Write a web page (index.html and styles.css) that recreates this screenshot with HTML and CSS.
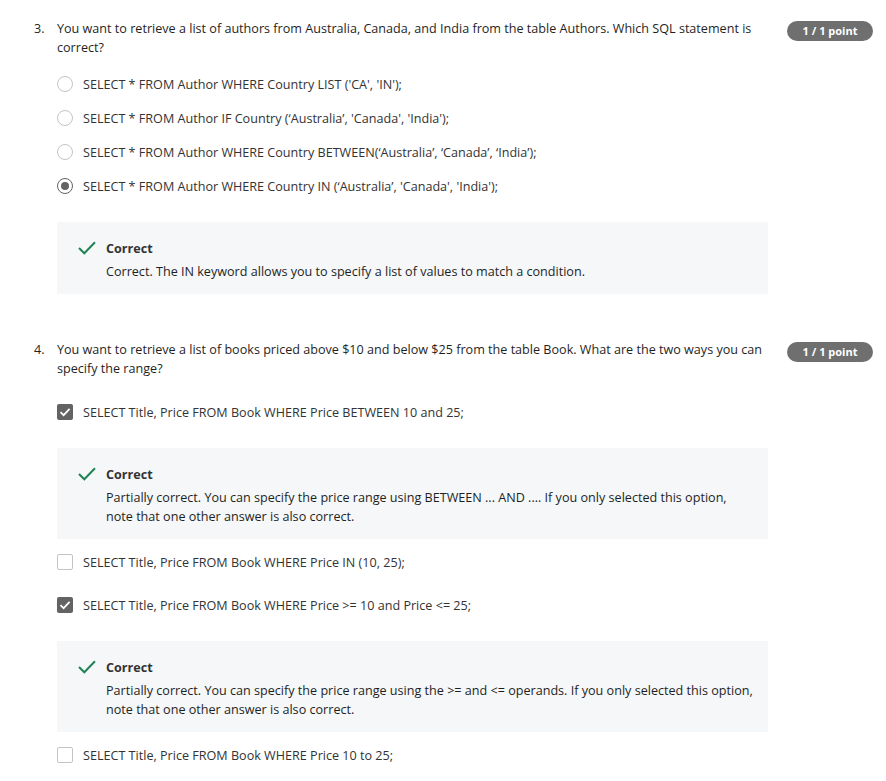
FILE: index.html
```html
<!DOCTYPE html>
<html>
<head>
<meta charset="utf-8">
<link rel="stylesheet" href="styles.css">
</head>
<body>
<div class="page">

  <div class="question q3">
    <div class="qnum">3.</div>
    <div class="qbody">
      <div class="qtext">You want to retrieve a list of authors from Australia, Canada, and India from the table Authors. Which SQL statement is correct?</div>
      <div class="opts radio-list">
        <div class="opt"><span class="radio"></span><span class="otext">SELECT * FROM Author WHERE Country LIST ('CA', 'IN');</span></div>
        <div class="opt"><span class="radio"></span><span class="otext">SELECT * FROM Author IF Country (‘Australia’, 'Canada', 'India');</span></div>
        <div class="opt"><span class="radio"></span><span class="otext">SELECT * FROM Author WHERE Country BETWEEN(‘Australia’, ‘Canada’, ‘India’);</span></div>
        <div class="opt"><span class="radio selected"></span><span class="otext">SELECT * FROM Author WHERE Country IN (‘Australia’, 'Canada', 'India');</span></div>
      </div>
      <div class="feedback fb-radio">
        <svg class="fb-icon" width="18" height="14" viewBox="0 0 18 14"><path d="M1 7 L6.3 12.3 L17 1.3" fill="none" stroke="#1f8354" stroke-width="2"/></svg>
        <div class="fb-body">
          <div class="fb-title">Correct</div>
          <div class="fb-text">Correct. The IN keyword allows you to specify a list of values to match a condition.</div>
        </div>
      </div>
    </div>
    <div class="badge">1 / 1 point</div>
  </div>

  <div class="question q4">
    <div class="qnum">4.</div>
    <div class="qbody">
      <div class="qtext qtext-check">You want to retrieve a list of books priced above $10 and below $25 from the table Book. What are the two ways you can specify the range?</div>
      <div class="opts check-list">
        <div class="item">
          <div class="opt"><span class="box checked"><svg width="16" height="16" viewBox="0 0 16 16"><path d="M3.5 8.2 L6.6 11.2 L12.6 4.8" fill="none" stroke="#fff" stroke-width="1.7"/></svg></span><span class="otext">SELECT Title, Price FROM Book WHERE Price BETWEEN 10 and 25;</span></div>
          <div class="feedback fb-check">
            <svg class="fb-icon" width="18" height="14" viewBox="0 0 18 14"><path d="M1 7 L6.3 12.3 L17 1.3" fill="none" stroke="#1f8354" stroke-width="2"/></svg>
            <div class="fb-body">
              <div class="fb-title">Correct</div>
              <div class="fb-text">Partially correct. You can specify the price range using BETWEEN ... AND .... If you only selected this option, note that one other answer is also correct.</div>
            </div>
          </div>
        </div>
        <div class="item">
          <div class="opt"><span class="box"></span><span class="otext">SELECT Title, Price FROM Book WHERE Price IN (10, 25);</span></div>
        </div>
        <div class="item">
          <div class="opt"><span class="box checked"><svg width="16" height="16" viewBox="0 0 16 16"><path d="M3.5 8.2 L6.6 11.2 L12.6 4.8" fill="none" stroke="#fff" stroke-width="1.7"/></svg></span><span class="otext">SELECT Title, Price FROM Book WHERE Price &gt;= 10 and Price &lt;= 25;</span></div>
          <div class="feedback fb-check">
            <svg class="fb-icon" width="18" height="14" viewBox="0 0 18 14"><path d="M1 7 L6.3 12.3 L17 1.3" fill="none" stroke="#1f8354" stroke-width="2"/></svg>
            <div class="fb-body">
              <div class="fb-title">Correct</div>
              <div class="fb-text">Partially correct. You can specify the price range using the &gt;= and &lt;= operands. If you only selected this option, note that one other answer is also correct.</div>
            </div>
          </div>
        </div>
        <div class="item">
          <div class="opt"><span class="box"></span><span class="otext">SELECT Title, Price FROM Book WHERE Price 10 to 25;</span></div>
        </div>
      </div>
    </div>
    <div class="badge">1 / 1 point</div>
  </div>

</div>
</body>
</html>
```

FILE: styles.css
```css
* { box-sizing: border-box; }
html, body { margin: 0; padding: 0; background: #fff; }
body {
  font-family: "Open Sans", "Liberation Sans", sans-serif;
  font-size: 12.6px;
  line-height: 19px;
  color: #1f1f1f;
}
.page {
  padding: 19px 13px 0 34px;
}
.question {
  display: flex;
  align-items: flex-start;
}
.q3 { margin-bottom: 46px; }
.qnum {
  width: 23px;
  flex: none;
}
.qbody {
  width: 711px;
  flex: none;
}
.qtext { margin-bottom: 10px; }
.qtext-check { margin-bottom: 14px; }
.badge {
  margin-left: 19px;
  margin-top: 2px;
  width: 86px;
  height: 20px;
  border-radius: 10px;
  background: #6f6f6f;
  color: #fff;
  font-size: 11px;
  font-weight: 700;
  line-height: 20px;
  text-align: center;
  flex: none;
}
.opt {
  display: flex;
  align-items: center;
  height: 34px;
}
.check-list .opt { height: 40px; }
.check-list .item { margin-bottom: 3px; }
.otext {
  margin-left: 10px;
  color: #333;
}
.radio {
  width: 16px;
  height: 16px;
  border-radius: 50%;
  border: 1.5px solid #c4c4c4;
  flex: none;
  display: flex;
  align-items: center;
  justify-content: center;
}
.radio.selected { border-color: #636363; }
.radio.selected::after {
  content: "";
  width: 8px;
  height: 8px;
  border-radius: 50%;
  background: #636363;
}
.box {
  width: 16px;
  height: 16px;
  border-radius: 2px;
  border: 1.5px solid #c4c4c4;
  flex: none;
  display: flex;
}
.box.checked {
  background: #636363;
  border: none;
}
.feedback {
  display: flex;
  align-items: flex-start;
  background: #f5f7f8;
  padding: 17px 14px 13px 21px;
}
.fb-radio { margin-top: 19px; }
.fb-check { margin-top: 16px; }
.fb-icon {
  flex: none;
  margin-top: 2px;
}
.fb-body { margin-left: 10px; }
.fb-title {
  font-weight: 700;
  color: #333;
  margin-bottom: 4px;
}
.fb-text { color: #1f1f1f; }
```
